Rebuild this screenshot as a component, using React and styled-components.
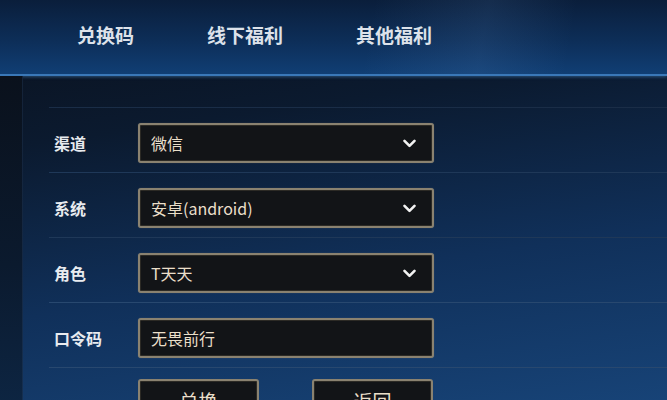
import React from 'react';
import styled, { createGlobalStyle } from 'styled-components';

const GlobalStyle = createGlobalStyle`
  html, body {
    margin: 0;
    padding: 0;
    background: #0a1322;
  }
  body {
    font-family: "Noto Sans CJK SC", "Noto Sans", sans-serif;
  }
`;

const Page = styled.div`
  width: 667px;
  height: 400px;
  overflow: hidden;
  display: flex;
  flex-direction: column;
  background: linear-gradient(172deg, #0a101b 0%, #0b1a2f 30%, #10305a 65%, #174377 100%);
`;

const Header = styled.div`
  height: 76px;
  flex-shrink: 0;
  display: flex;
  align-items: center;
  gap: 73px;
  padding: 0 0 6px 77px;
  box-sizing: border-box;
  border-bottom: 2px solid #3a78b8;
  box-shadow: 0 1px 3px rgba(80, 150, 220, 0.45);
  background:
    linear-gradient(100deg, rgba(255, 255, 255, 0) 55%, rgba(120, 170, 230, 0.1) 72%, rgba(255, 255, 255, 0) 85%),
    linear-gradient(180deg, #0a1e3b 0%, #0d2e58 55%, #103e74 100%);
`;

const Tab = styled.div`
  font-size: 19px;
  font-weight: 700;
  color: #dde2ea;
`;

const Body = styled.div`
  flex: 1;
  display: flex;
`;

const SideStrip = styled.div`
  width: 22px;
  flex-shrink: 0;
  background: linear-gradient(180deg, #0a111c 0%, #0b1a2e 55%, #0d2644 100%);
  border-right: 1px solid rgba(40, 70, 110, 0.35);
`;

const Form = styled.div`
  flex: 1;
  margin: 31px 0 0 26px;
  border-top: 1px solid #1a2d47;
`;

const Row = styled.div`
  display: flex;
  align-items: center;
  padding: 15px 0 9px;
  border-bottom: 1px solid ${(p) => (p.$bright ? '#28486f' : '#1f3858')};
`;

const Label = styled.div`
  width: 89px;
  padding-left: 5px;
  box-sizing: border-box;
  font-size: 16px;
  font-weight: 700;
  color: #e8ebef;
`;

const Field = styled.div`
  width: 296px;
  height: 40px;
  box-sizing: border-box;
  display: flex;
  align-items: center;
  justify-content: space-between;
  padding: 0 16px 0 11px;
  background: #121417;
  border: 2px solid #8a8270;
  border-radius: 3px;
  box-shadow: inset 0 0 0 1px #2c2a25, 0 0 1px rgba(200, 190, 160, 0.4);
  font-size: 16px;
  color: #eadfca;
`;

const ButtonRow = styled.div`
  display: flex;
  gap: 53px;
  padding: 11px 0 0 89px;
`;

const Button = styled.div`
  width: 121px;
  height: 40px;
  box-sizing: border-box;
  display: flex;
  align-items: center;
  justify-content: center;
  background: #121417;
  border: 2px solid #8a8270;
  border-radius: 3px;
  box-shadow: inset 0 0 0 1px #2c2a25;
  font-size: 19px;
  color: #eadfca;
  padding-top: 2px;
`;

const Chevron = () => (
  <svg width="13" height="9" viewBox="0 0 13 9">
    <polyline points="1.5,1.8 6.5,6.8 11.5,1.8" fill="none" stroke="#f2f2f2" strokeWidth="2.6" strokeLinecap="round" strokeLinejoin="round" />
  </svg>
);

const rows = [
  { label: '渠道', value: '微信', select: true },
  { label: '系统', value: '安卓(android)', select: true },
  { label: '角色', value: 'T天天', select: true },
  { label: '口令码', value: '无畏前行', select: false },
];

export default function App() {
  return (
    <>
      <GlobalStyle />
      <Page>
        <Header>
          <Tab>兑换码</Tab>
          <Tab>线下福利</Tab>
          <Tab>其他福利</Tab>
        </Header>
        <Body>
          <SideStrip />
          <Form>
            {rows.map((r, i) => (
              <Row key={r.label} $bright={i > 1}>
                <Label>{r.label}</Label>
                <Field>
                  <span>{r.value}</span>
                  {r.select && <Chevron />}
                </Field>
              </Row>
            ))}
            <ButtonRow>
              <Button>兑换</Button>
              <Button>返回</Button>
            </ButtonRow>
          </Form>
        </Body>
      </Page>
    </>
  );
}
